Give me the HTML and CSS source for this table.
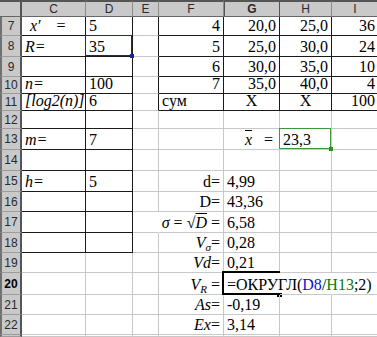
FILE: index.html
```html
<!DOCTYPE html>
<html>
<head>
<meta charset="utf-8">
<link rel="stylesheet" href="styles.css">
</head>
<body>
<div class="sheet">
  <div class="c hd corner"></div>
  <div class="c hd">C</div>
  <div class="c hd">D</div>
  <div class="c hd">E</div>
  <div class="c hd">F</div>
  <div class="c hd sel">G</div>
  <div class="c hd">H</div>
  <div class="c hd">I</div>

  <div class="c rh">7</div>
  <div class="c bk"><span class="it x7">x′</span><span class="eq7">=</span></div>
  <div class="c bk">5</div>
  <div class="c bkr"></div>
  <div class="c bk r">4</div>
  <div class="c bk r">20,0</div>
  <div class="c bk r">25,0</div>
  <div class="c bk r">36</div>

  <div class="c rh">8</div>
  <div class="c bk"><span class="it">R=</span></div>
  <div class="c bk ref-blue">35</div>
  <div class="c bkr"></div>
  <div class="c bk r">5</div>
  <div class="c bk r">25,0</div>
  <div class="c bk r">30,0</div>
  <div class="c bk r">24</div>

  <div class="c rh">9</div>
  <div class="c bk"></div>
  <div class="c bk"></div>
  <div class="c bkr"></div>
  <div class="c bk r">6</div>
  <div class="c bk r">30,0</div>
  <div class="c bk r">35,0</div>
  <div class="c bk r">10</div>

  <div class="c rh">10</div>
  <div class="c bk"><span class="it">n=</span></div>
  <div class="c bk">100</div>
  <div class="c bkr"></div>
  <div class="c bk r">7</div>
  <div class="c bk r">35,0</div>
  <div class="c bk r">40,0</div>
  <div class="c bk r">4</div>

  <div class="c rh">11</div>
  <div class="c bk"><span class="it">[log2(n)]</span></div>
  <div class="c bk">6</div>
  <div class="c bkr"></div>
  <div class="c bk">сум</div>
  <div class="c bk ctr">X</div>
  <div class="c bk ctr">X</div>
  <div class="c bk r">100</div>

  <div class="c rh">12</div>
  <div class="c bk"></div>
  <div class="c bk"></div>
  <div class="c"></div>
  <div class="c"></div>
  <div class="c"></div>
  <div class="c"></div>
  <div class="c"></div>

  <div class="c rh">13</div>
  <div class="c bk"><span class="it">m=</span></div>
  <div class="c bk">7</div>
  <div class="c"></div>
  <div class="c"></div>
  <div class="c"><span class="it xbar">x</span><span class="eq13">=</span></div>
  <div class="c ref-green">23,3</div>
  <div class="c"></div>

  <div class="c rh">14</div>
  <div class="c bk"></div>
  <div class="c bk"></div>
  <div class="c"></div>
  <div class="c"></div>
  <div class="c"></div>
  <div class="c"></div>
  <div class="c"></div>

  <div class="c rh">15</div>
  <div class="c bk"><span class="it">h=</span></div>
  <div class="c bk">5</div>
  <div class="c"></div>
  <div class="c r">d=</div>
  <div class="c">4,99</div>
  <div class="c"></div>
  <div class="c"></div>

  <div class="c rh">16</div>
  <div class="c bk"></div>
  <div class="c bk"></div>
  <div class="c"></div>
  <div class="c r">D=</div>
  <div class="c">43,36</div>
  <div class="c"></div>
  <div class="c"></div>

  <div class="c rh">17</div>
  <div class="c bk"></div>
  <div class="c bk"></div>
  <div class="c nor"></div>
  <div class="c r"><span class="it">σ</span>&nbsp;=&nbsp;<span class="rad">√</span><span class="it ovl">D</span>&nbsp;=</div>
  <div class="c">6,58</div>
  <div class="c"></div>
  <div class="c"></div>

  <div class="c rh">18</div>
  <div class="c bk"></div>
  <div class="c bk"></div>
  <div class="c"></div>
  <div class="c r"><span class="it">V<sub>σ</sub></span>=</div>
  <div class="c">0,28</div>
  <div class="c"></div>
  <div class="c"></div>

  <div class="c rh">19</div>
  <div class="c"></div>
  <div class="c"></div>
  <div class="c"></div>
  <div class="c r"><span class="it">Vd</span>=</div>
  <div class="c">0,21</div>
  <div class="c"></div>
  <div class="c"></div>

  <div class="c rh cur">20</div>
  <div class="c"></div>
  <div class="c"></div>
  <div class="c"></div>
  <div class="c r"><span class="it">V<sub>R</sub></span>&nbsp;=</div>
  <div class="c nor active">=ОКРУГЛ(<span class="fb">D8</span>/<span class="fg">H13</span>;2)</div>
  <div class="c nor"></div>
  <div class="c"></div>

  <div class="c rh">21</div>
  <div class="c"></div>
  <div class="c"></div>
  <div class="c"></div>
  <div class="c r"><span class="it">As</span>=</div>
  <div class="c">-0,19</div>
  <div class="c"></div>
  <div class="c"></div>

  <div class="c rh">22</div>
  <div class="c"></div>
  <div class="c"></div>
  <div class="c"></div>
  <div class="c r"><span class="it">Ex</span>=</div>
  <div class="c">3,14</div>
  <div class="c"></div>
  <div class="c"></div>

  <div class="c rh"></div>
  <div class="c"></div>
  <div class="c"></div>
  <div class="c"></div>
  <div class="c"></div>
  <div class="c"></div>
  <div class="c"></div>
  <div class="c"></div>
</div>
</body>
</html>
```

FILE: styles.css
```css
html, body {
  margin: 0;
  padding: 0;
  background: #fff;
  overflow: hidden;
}

.sheet {
  display: grid;
  grid-template-columns: 22px 64px 47px 26px 65px 56px 52px 47px;
  grid-template-rows: 17px 19px 21px 20px 17px 17px 18px 21px 21px 21px 20px 21px 20px 20px 22px 20px 20px 2px;
  width: 379px;
  height: 337px;
  overflow: hidden;
  background: #fff;
  font-family: "Liberation Serif", "Times New Roman", serif;
  font-size: 16px;
  color: #000;
}

.c {
  box-sizing: border-box;
  border-right: 1px solid #c8c8c8;
  border-bottom: 1px solid #c8c8c8;
  display: flex;
  align-items: flex-end;
  padding: 0 3px 0 3px;
  white-space: nowrap;
  line-height: 18px;
  position: relative;
  min-width: 0;
}

.r { justify-content: flex-end; padding-right: 3px; }
.ctr { justify-content: center; }

.bk { border-right-color: #1a1a1a; border-bottom-color: #1a1a1a; }
.bkr { border-right-color: #1a1a1a; }
.nor { border-right-color: transparent; }

.it { font-style: italic; }

.hd {
  background: #c9c9c9;
  border-top: 2px solid #555;
  border-right: 1px solid #8c8c8c;
  border-bottom: 1px solid #666;
  font-family: "Liberation Sans", Arial, sans-serif;
  font-size: 12px;
  color: #2a2a2a;
  justify-content: center;
  align-items: center;
  line-height: 14px;
  padding: 0;
}
.hd.sel { font-weight: bold; border-right-color: #555; border-left: 1px solid #555; }
.corner { border-right: 2px solid #555; }

.rh {
  background: #c9c9c9;
  border-left: 2px solid #707070;
  border-right: 2px solid #555;
  border-bottom: 1px solid #9c9c9c;
  font-family: "Liberation Sans", Arial, sans-serif;
  font-size: 12px;
  color: #2a2a2a;
  justify-content: center;
  align-items: center;
  line-height: 14px;
  padding: 0;
}
.rh.cur { font-weight: bold; color: #000; }

.x7 { margin-left: 5px; }
.eq7 { margin-left: 16px; }
.xbar { margin-left: 18px; text-decoration: overline; }
.eq13 { margin-left: 12px; }
.ovl { text-decoration: overline; }

sub { font-size: 11px; line-height: 0; vertical-align: -3px; }

.fb { color: #1010d0; }
.fg { color: #0a7a0a; }

.ref-blue::after {
  content: "";
  position: absolute;
  top: -1px; left: -1px; right: 0; bottom: 0;
  border: 1px solid #1f1f9f;
}
.ref-blue::before {
  content: "";
  position: absolute;
  right: -2px; bottom: -2px;
  width: 4px; height: 4px;
  background: #1f1f9f;
  z-index: 2;
}
.ref-green::after {
  content: "";
  position: absolute;
  top: -1px; left: -1px; right: 0; bottom: 0;
  border: 1px solid #3a9a3a;
}
.ref-green::before {
  content: "";
  position: absolute;
  right: -2px; bottom: -2px;
  width: 4px; height: 4px;
  background: #2f8a2f;
  z-index: 2;
}

.active::after {
  content: "";
  position: absolute;
  top: -2px; left: -2px; right: -1px; bottom: -1px;
  border: 2px solid #000;
  border-right: none;
}
.active::before {
  content: "";
  position: absolute;
  right: -3px; bottom: -3px;
  width: 5px; height: 4px;
  background: #000;
}
```
